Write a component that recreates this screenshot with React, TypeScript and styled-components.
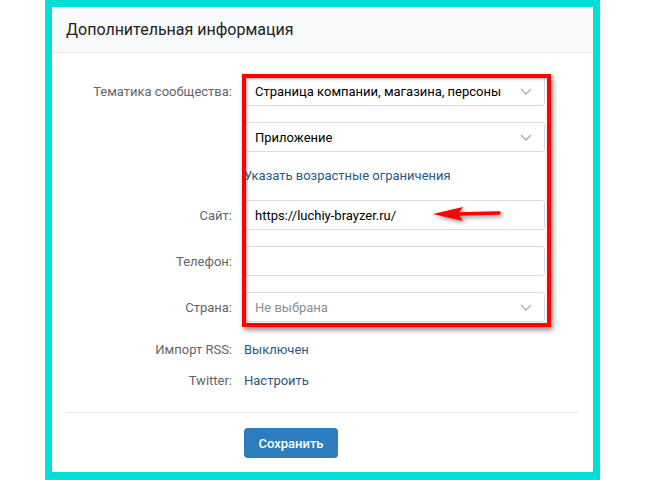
import React from 'react';
import styled, { createGlobalStyle } from 'styled-components';

const GlobalStyle = createGlobalStyle`
  html, body {
    margin: 0;
    padding: 0;
    background: #ffffff;
    font-family: Roboto, "Noto Sans", "Liberation Sans", sans-serif;
    overflow: hidden;
  }
`;

interface FieldProps {
  label?: string;
  value?: string;
  placeholder?: boolean;
  select?: boolean;
}

const Chevron = () => (
  <svg width="12" height="7" viewBox="0 0 12 7">
    <path d="M1 1 L6 6 L11 1" fill="none" stroke="#a6aeb6" strokeWidth="1.3" />
  </svg>
);

const Field = (props: FieldProps) => (
  <Row>
    <Label>{props.label ? `${props.label}:` : ''}</Label>
    <InputBox>
      <InputText placeholder={props.placeholder}>{props.value}</InputText>
      {props.select ? <Chevron /> : null}
    </InputBox>
  </Row>
);

const InfoRow = (props: { label: string; value: string }) => (
  <TextRow>
    <Label>{`${props.label}:`}</Label>
    <LinkText>{props.value}</LinkText>
  </TextRow>
);

const App = () => (
  <>
    <GlobalStyle />
    <Frame>
      <Panel>
        <Header>Дополнительная информация</Header>
        <Body>
          <Fields>
            <Field label="Тематика сообщества" value="Страница компании, магазина, персоны" select />
            <Field value="Приложение" select />
            <LinkRow>
              <span />
              <LinkText>Указать возрастные ограничения</LinkText>
            </LinkRow>
            <Field label="Сайт" value="https://luchiy-brayzer.ru/" />
            <Field label="Телефон" />
            <Field label="Страна" value="Не выбрана" placeholder select />
          </Fields>
          <Infos>
            <InfoRow label="Импорт RSS" value="Выключен" />
            <InfoRow label="Twitter" value="Настроить" />
          </Infos>
          <Divider />
          <Footer>
            <span />
            <SaveButton>Сохранить</SaveButton>
          </Footer>
        </Body>
        <RedBox />
        <Arrow width="70" height="18" viewBox="0 0 70 18">
          <polygon points="0,8 30,1 25,8 30,15" fill="#ff0000" />
          <line x1="24" y1="8" x2="66" y2="7" stroke="#ff0000" strokeWidth="3.5" strokeLinecap="round" />
        </Arrow>
      </Panel>
    </Frame>
  </>
);

export default App;

const Frame = styled.div`
  box-sizing: border-box;
  margin-left: 45px;
  width: 555px;
  height: 480px;
  border: 7px solid #00e0d6;
  border-bottom-width: 8px;
`;

const Panel = styled.div`
  position: relative;
  height: 100%;
  background: #ffffff;
`;

const Header = styled.div`
  box-sizing: border-box;
  height: 46px;
  padding: 0 14px;
  display: flex;
  align-items: center;
  background: #f9fafb;
  border-bottom: 1px solid #e7e8ec;
  font-size: 16px;
  color: #222222;
`;

const Body = styled.div`
  padding: 23px 14px 0;
  display: flex;
  flex-direction: column;
`;

const Fields = styled.div`
  display: flex;
  flex-direction: column;
  gap: 16px;
`;

const Row = styled.div`
  display: grid;
  grid-template-columns: 166px 300px;
  column-gap: 13px;
  align-items: center;
  height: 30px;
`;

const LinkRow = styled(Row)`
  height: 16px;
  line-height: 12px;
  column-gap: 12px;
`;

const TextRow = styled(Row)`
  height: 20px;
  column-gap: 12px;
`;

const Label = styled.div`
  text-align: right;
  font-size: 13px;
  color: #656565;
  white-space: nowrap;
`;

const InputBox = styled.div`
  box-sizing: border-box;
  height: 30px;
  padding: 0 12px 0 9px;
  display: flex;
  align-items: center;
  justify-content: space-between;
  border: 1px solid #d8dde3;
  border-radius: 3px;
  background: #ffffff;
`;

const InputText = styled.span<{ placeholder?: boolean }>`
  font-size: 13px;
  color: ${(p) => (p.placeholder ? '#8a8f96' : '#000000')};
  white-space: nowrap;
`;

const LinkText = styled.span`
  font-size: 13px;
  color: #2a5885;
  white-space: nowrap;
`;

const Infos = styled.div`
  margin-top: 17px;
  display: flex;
  flex-direction: column;
  gap: 11px;
`;

const Divider = styled.div`
  margin-top: 22px;
  height: 1px;
  background: #e7e8ec;
`;

const Footer = styled.div`
  margin-top: 15px;
  display: grid;
  grid-template-columns: 166px auto;
  column-gap: 12px;
  justify-content: start;
`;

const SaveButton = styled.button`
  box-sizing: border-box;
  width: 94px;
  height: 30px;
  border: none;
  border-radius: 4px;
  background: #2d7cbd;
  color: #ffffff;
  font-family: inherit;
  font-size: 13px;
  font-weight: 500;
  cursor: pointer;
`;

const RedBox = styled.div`
  position: absolute;
  left: 190px;
  top: 67px;
  width: 309px;
  height: 253px;
  box-sizing: border-box;
  border: 4px solid #ff0000;
  box-shadow: 2px 3px 5px rgba(0, 0, 0, 0.45), inset 1px 1px 3px rgba(0, 0, 0, 0.35);
  pointer-events: none;
`;

const Arrow = styled.svg`
  position: absolute;
  left: 381px;
  top: 199px;
  filter: drop-shadow(2px 2px 2px rgba(0, 0, 0, 0.45));
`;
